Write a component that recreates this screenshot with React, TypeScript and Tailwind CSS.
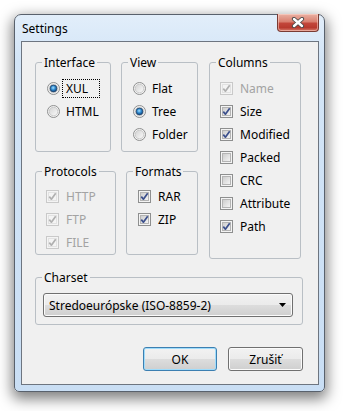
import { ReactNode } from "react"

const FONT = "font-['Segoe_UI','Noto_Sans',sans-serif]"

function GroupBox({
  title,
  className,
  children,
}: {
  title: string
  className: string
  children: ReactNode
}) {
  return (
    <div className={`relative rounded-[3px] border border-[#b9bfc5] ${className}`}>
      <span className="absolute -top-[8px] left-[6px] bg-[#f0f0f0] px-[2px] text-[12px] leading-[15px] text-black">
        {title}
      </span>
      {children}
    </div>
  )
}

function Check({ label, checked, disabled }: { label: string; checked?: boolean; disabled?: boolean }) {
  const edge = disabled ? "#c9c9c9" : "#8e8f8f"
  const mark = disabled ? "#b0b0b0" : "#3b4f8c"
  return (
    <div className="flex h-[23px] items-center pl-[10px]">
      <svg width="13" height="13" viewBox="0 0 13 13" className="shrink-0">
        <defs>
          <linearGradient id={disabled ? "cbd" : "cbn"} x1="0" y1="0" x2="1" y2="1">
            <stop offset="0" stopColor={disabled ? "#f4f4f4" : "#cbcbcb"} />
            <stop offset="1" stopColor={disabled ? "#f4f4f4" : "#f6f6f6"} />
          </linearGradient>
        </defs>
        <rect x="0.5" y="0.5" width="12" height="12" fill="#f4f4f4" stroke={edge} />
        <rect x="2.5" y="2.5" width="8" height="8" fill={`url(#${disabled ? "cbd" : "cbn"})`} stroke={disabled ? "#e2e2e2" : "#b4b4b4"} />
        {checked ? (
          <path d="M3.3 6.6 L5.4 9.2 L9.7 3.2" fill="none" stroke={mark} strokeWidth="1.7" strokeLinejoin="round" />
        ) : null}
      </svg>
      <span className={`ml-[7px] text-[12px] leading-[15px] ${disabled ? "text-[#a3a3a3]" : "text-black"}`}>{label}</span>
    </div>
  )
}

function Radio({ label, checked, focused }: { label: string; checked?: boolean; focused?: boolean }) {
  return (
    <div className="flex h-[23px] items-center pl-[11px]">
      <svg width="13" height="13" viewBox="0 0 13 13" className="shrink-0">
        <defs>
          <linearGradient id="rdo" x1="0" y1="0" x2="1" y2="1">
            <stop offset="0" stopColor="#d2d2d2" />
            <stop offset="1" stopColor="#fbfbfb" />
          </linearGradient>
          <radialGradient id="rdot" cx="0.45" cy="0.4" r="0.6">
            <stop offset="0" stopColor="#a9e0ff" />
            <stop offset="0.5" stopColor="#2f8bd0" />
            <stop offset="1" stopColor="#0d3f78" />
          </radialGradient>
        </defs>
        <circle cx="6.5" cy="6.5" r="6" fill="#f3f3f3" stroke="#8e8f8f" />
        <circle cx="6.5" cy="6.5" r="4.3" fill="url(#rdo)" stroke="#c2c2c2" strokeWidth="0.8" />
        {checked ? <circle cx="6.5" cy="6.5" r="3.4" fill="url(#rdot)" stroke="#24476f" strokeWidth="0.8" /> : null}
      </svg>
      <span
        className={`ml-[2px] border pl-[3px] text-[12px] leading-[15px] text-black ${
          focused ? "w-[38px] border-dotted border-black py-[1px]" : "border-transparent"
        }`}>
        {label}
      </span>
    </div>
  )
}

function PushButton({ children, primary }: { children: ReactNode; primary?: boolean }) {
  return (
    <button
      type="button"
      className={`h-[24px] rounded-[3px] border bg-[linear-gradient(to_bottom,#f2f2f2_0%,#ebebeb_50%,#dddddd_50%,#cfcfcf_100%)] text-[12px] leading-[15px] text-black ${
        primary
          ? "w-[74px] border-[#3c7fb1] shadow-[inset_0_0_0_1px_#9fdcfb]"
          : "w-[75px] border-[#707070] shadow-[inset_0_0_0_1px_#fbfbfb]"
      }`}>
      {children}
    </button>
  )
}

export default function App() {
  return (
    <div className={`h-[411px] w-[345px] overflow-hidden bg-white pl-[14px] pt-[14px] ${FONT}`}>
      <div className="flex h-[378px] w-[311px] flex-col rounded-t-[7px] rounded-b-[5px] border border-[#59616c] bg-[linear-gradient(to_bottom,#e2eefa_0%,#d3e5f7_12%,#c9def4_100%)] shadow-[0_5px_14px_2px_rgba(0,0,0,0.5)]">
        <div className="flex h-[26px] shrink-0 items-center justify-between pl-[7px]">
          <span className="pt-[1px] text-[12px] leading-[15px] text-black">Settings</span>
          <div className="mr-[5px] -mt-[1px] flex h-[18px] w-[42px] items-center justify-center self-start rounded-b-[4px] border border-t-0 border-[#7a3b33] bg-[linear-gradient(to_bottom,#eab1a3_0%,#d98070_45%,#c2463a_55%,#b83a2e_80%,#d77c6c_100%)] shadow-[inset_0_0_0_1px_rgba(255,220,210,0.5)]">
            <svg width="14" height="11" viewBox="0 0 14 11">
              <path d="M3 2 L11 9 M11 2 L3 9" stroke="#4a4a4a" strokeWidth="4.2" strokeLinecap="round" />
              <path d="M3 2 L11 9 M11 2 L3 9" stroke="#ffffff" strokeWidth="2.4" strokeLinecap="round" />
            </svg>
          </div>
        </div>

        <div className="ml-[6px] flex h-[344px] w-[298px] flex-col border border-[#6d7580] bg-[#f0f0f0] pl-[13px] pt-[20px]">
          <div className="flex gap-[11px]">
            <div className="flex flex-col gap-[19px]">
              <div className="flex gap-[10px]">
                <GroupBox title="Interface" className="h-[90px] w-[76px] pt-[14px]">
                  <Radio label="XUL" checked focused />
                  <Radio label="HTML" />
                </GroupBox>
                <GroupBox title="View" className="h-[90px] w-[77px] pt-[14px]">
                  <Radio label="Flat" />
                  <Radio label="Tree" checked />
                  <Radio label="Folder" />
                </GroupBox>
              </div>
              <div className="flex gap-[10px]">
                <GroupBox title="Protocols" className="h-[84px] w-[81px] pt-[13px]">
                  <Check label="HTTP" checked disabled />
                  <Check label="FTP" checked disabled />
                  <Check label="FILE" checked disabled />
                </GroupBox>
                <GroupBox title="Formats" className="h-[84px] w-[72px] pl-[1px] pt-[13px]">
                  <Check label="RAR" checked />
                  <Check label="ZIP" checked />
                </GroupBox>
              </div>
            </div>
            <GroupBox title="Columns" className="h-[197px] w-[92px] pt-[14px]">
              <Check label="Name" checked disabled />
              <Check label="Size" checked />
              <Check label="Modified" checked />
              <Check label="Packed" />
              <Check label="CRC" />
              <Check label="Attribute" />
              <Check label="Path" checked />
            </GroupBox>
          </div>

          <GroupBox title="Charset" className="mt-[18px] h-[48px] w-[268px] px-[7px] pt-[15px]">
            <div className="flex h-[24px] w-[250px] items-center justify-between rounded-[3px] border border-[#707070] bg-[linear-gradient(to_bottom,#f2f2f2_0%,#ebebeb_50%,#dddddd_50%,#cfcfcf_100%)] pl-[5px] pr-[6px] shadow-[inset_0_0_0_1px_#fbfbfb]">
              <span className="text-[12px] leading-[15px] text-black">Stredoeurópske (ISO-8859-2)</span>
              <svg width="7" height="4" viewBox="0 0 7 4">
                <path d="M0 0 H7 L3.5 4 Z" fill="#000" />
              </svg>
            </div>
          </GroupBox>

          <div className="mt-[22px] flex justify-end gap-[11px] pr-[15px]">
            <PushButton primary>OK</PushButton>
            <PushButton>Zrušiť</PushButton>
          </div>
        </div>
      </div>
    </div>
  )
}
